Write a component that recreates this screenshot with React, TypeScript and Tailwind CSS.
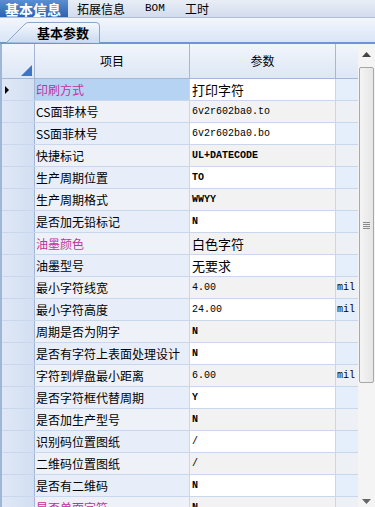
import React from "react";

type Row = { name: string; value: string; unit?: string; pink?: boolean; cjk?: boolean };

const rows: Row[] = [
  { name: "印刷方式", value: "打印字符", pink: true, cjk: true },
  { name: "CS面菲林号", value: "6v2r602ba0.to" },
  { name: "SS面菲林号", value: "6v2r602ba0.bo" },
  { name: "快捷标记", value: "UL+DATECODE" },
  { name: "生产周期位置", value: "TO" },
  { name: "生产周期格式", value: "WWYY" },
  { name: "是否加无铅标记", value: "N" },
  { name: "油墨颜色", value: "白色字符", pink: true, cjk: true },
  { name: "油墨型号", value: "无要求", cjk: true },
  { name: "最小字符线宽", value: "4.00", unit: "mil" },
  { name: "最小字符高度", value: "24.00", unit: "mil" },
  { name: "周期是否为阴字", value: "N" },
  { name: "是否有字符上表面处理设计", value: "N" },
  { name: "字符到焊盘最小距离", value: "6.00", unit: "mil" },
  { name: "是否字符框代替周期", value: "Y" },
  { name: "是否加生产型号", value: "N" },
  { name: "识别码位置图纸", value: "/" },
  { name: "二维码位置图纸", value: "/" },
  { name: "是否有二维码", value: "N" },
  { name: "是否单面字符", value: "N", pink: true },
];

const cjk = { fontFamily: '"Noto Sans CJK SC", "Noto Sans", sans-serif' };
const mono = { fontFamily: '"Liberation Mono", "DejaVu Sans Mono", monospace' };

const isCaps = (s: string) => /^[A-Z+]+$/.test(s);

export default function App() {
  return (
    <div className="w-[375px] h-[507px] overflow-hidden bg-white flex flex-col" style={cjk}>
      {/* top tab bar */}
      <div className="h-[18px] flex items-stretch bg-gradient-to-b from-[#e9eef6] to-[#d3dced] border-b border-[#aebfd6] shrink-0">
        <div className="relative w-[68px] bg-gradient-to-b from-[#5b8fd0] to-[#2b63ae] text-white font-bold text-[14px] leading-none pl-[5px] flex items-center">
          基本信息
          <div className="absolute left-[33px] bottom-0 w-0 h-0 border-l-[4px] border-r-[4px] border-b-[4px] border-l-transparent border-r-transparent border-b-white" />
        </div>
        <div className="text-[12px] leading-none text-black pl-[9px] w-[77px] flex items-center">拓展信息</div>
        <div className="text-[11px] leading-none text-black w-[40px] flex items-center" style={mono}>BOM</div>
        <div className="text-[12px] leading-none text-black flex items-center">工时</div>
      </div>
      {/* second bar */}
      <div className="h-[24px] relative bg-gradient-to-b from-[#f3f6fc] to-[#d9e5f6] shrink-0 flex items-end">
        <div className="ml-[6px] h-[20px] w-[94px] relative">
          <svg className="absolute left-0 top-0" width="94" height="21" viewBox="0 0 94 21">
            <defs>
              <linearGradient id="tg" x1="0" y1="0" x2="0" y2="1">
                <stop offset="0" stopColor="#f6f9fe" />
                <stop offset="1" stopColor="#c9daf1" />
              </linearGradient>
            </defs>
            <path d="M0.5 20.5 L19 2 Q20.5 0.5 23 0.5 L90 0.5 Q93.5 0.5 93.5 4 L93.5 21" fill="url(#tg)" stroke="#8ca6cb" />
          </svg>
          <div className="absolute left-[31px] top-0 h-[20px] flex items-center text-[13px] font-bold leading-none text-black">基本参数</div>
        </div>
      </div>
      <div className="h-[2px] bg-[#6d95cf] shrink-0" />
      {/* grid */}
      <div className="flex flex-1 min-h-0">
        <div className="w-[358px] flex flex-col border-l-[2px] border-[#9fb6d8]">
          {/* header */}
          <div className="h-[35px] flex shrink-0 bg-gradient-to-b from-[#f1f5fc] to-[#dde7f5] border-b border-[#a3b8d6]">
            <div className="w-[33px] border-r border-[#a3b8d6] relative">
              <svg className="absolute right-[2px] bottom-[2px]" width="11" height="11" viewBox="0 0 11 11">
                <path d="M11 0 L11 11 L0 11 Z" fill="#3f74c4" />
              </svg>
            </div>
            <div className="w-[155px] border-r border-[#a3b8d6] flex items-center justify-center text-[12px] text-black">项目</div>
            <div className="w-[146px] border-r border-[#a3b8d6] flex items-center justify-center text-[12px] text-black">参数</div>
            <div className="flex-1" />
          </div>
          {rows.map((r, i) => {
            const odd = i % 2 === 1;
            const sel = i === 0;
            return (
              <div key={i} className="h-[22px] flex shrink-0 border-b border-[#c8d7ec]">
                <div className="w-[33px] border-r border-[#a3b8d6] bg-gradient-to-r from-[#dfe8f6] to-[#d2dff2] relative">
                  {sel && (
                    <svg className="absolute left-[3px] top-[7px]" width="5" height="8" viewBox="0 0 5 8">
                      <path d="M0 0 L4 4 L0 8 Z" fill="#000" />
                    </svg>
                  )}
                </div>
                <div
                  className={`w-[155px] border-r border-[#c8d7ec] flex items-center pl-[1px] text-[12px] whitespace-nowrap overflow-hidden ${sel ? "bg-[#b6d3f4]" : odd ? "bg-[#eef1f7]" : "bg-[#e8eef9]"} ${r.pink ? "text-[#c2329e]" : "text-black"}`}
                >
                  {r.name}
                </div>
                <div
                  className={`w-[146px] border-r border-[#c8d7ec] flex items-center pl-[2px] text-black whitespace-nowrap ${odd ? "bg-[#f2f2f2]" : "bg-white"} ${r.cjk ? "text-[13px]" : "text-[10px]"} ${!r.cjk && isCaps(r.value) ? "font-bold" : "font-normal"}`}
                  style={r.cjk ? cjk : mono}
                >
                  {r.value}
                </div>
                <div
                  className={`flex-1 flex items-center pl-[1px] text-[10px] text-black ${odd ? "bg-[#edf0f5]" : "bg-[#e5eefb]"}`}
                  style={mono}
                >
                  {r.unit ?? ""}
                </div>
              </div>
            );
          })}
        </div>
        {/* scrollbar */}
        <div className="w-[17px] bg-[#f4f4f4] flex flex-col items-center relative">
          <div className="h-[20px] flex items-center justify-center">
            <svg width="9" height="5" viewBox="0 0 9 5">
              <path d="M0 5 L4.5 0 L9 5 Z" fill="#444" />
            </svg>
          </div>
          <div className="mt-[3px] h-[316px] w-[15px] rounded-[2px] border border-[#a7a7a7] bg-gradient-to-r from-[#f4f4f4] to-[#e6e6e6] flex items-center justify-center">
            <div className="flex flex-col gap-[1px]">
              <div className="w-[7px] h-[1px] bg-[#8a8a8a]" />
              <div className="w-[7px] h-[1px] bg-[#8a8a8a]" />
              <div className="w-[7px] h-[1px] bg-[#8a8a8a]" />
              <div className="w-[7px] h-[1px] bg-[#8a8a8a]" />
            </div>
          </div>
          <div className="absolute left-[4px] top-[455px]">
            <svg width="9" height="5" viewBox="0 0 9 5">
              <path d="M0 0 L4.5 5 L9 0 Z" fill="#666" />
            </svg>
          </div>
        </div>
      </div>
    </div>
  );
}
